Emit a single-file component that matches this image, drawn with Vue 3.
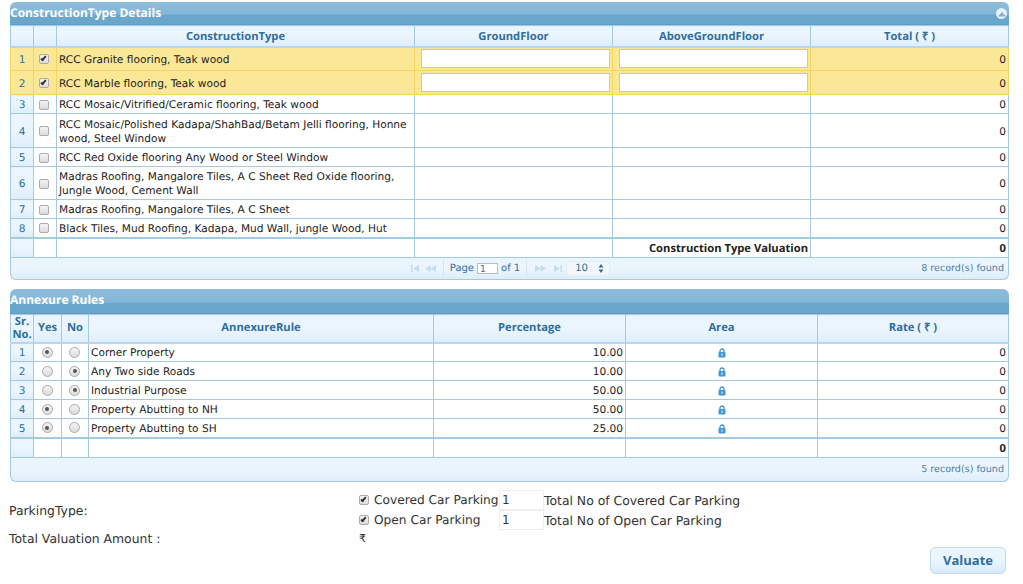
<script setup>
const constructionRows = [
  { n: 1, name: 'RCC Granite flooring, Teak wood', on: true, cls: 'h24' },
  { n: 2, name: 'RCC Marble flooring, Teak wood', on: true, cls: 'h24' },
  { n: 3, name: 'RCC Mosaic/Vitrified/Ceramic flooring, Teak wood', on: false, cls: 'h19' },
  { n: 4, name: 'RCC Mosaic/Polished Kadapa/ShahBad/Betam Jelli flooring, Honne wood, Steel Window', on: false, cls: 'h34' },
  { n: 5, name: 'RCC Red Oxide flooring Any Wood or Steel Window', on: false, cls: 'h19' },
  { n: 6, name: 'Madras Roofing, Mangalore Tiles, A C Sheet Red Oxide flooring, Jungle Wood, Cement Wall', on: false, cls: 'h33' },
  { n: 7, name: 'Madras Roofing, Mangalore Tiles, A C Sheet', on: false, cls: 'h19' },
  { n: 8, name: 'Black Tiles, Mud Roofing, Kadapa, Mud Wall, jungle Wood, Hut', on: false, cls: 'h19' }
]
const annexRows = [
  { n: 1, name: 'Corner Property', yes: true, pct: '10.00' },
  { n: 2, name: 'Any Two side Roads', yes: false, pct: '10.00' },
  { n: 3, name: 'Industrial Purpose', yes: false, pct: '50.00' },
  { n: 4, name: 'Property Abutting to NH', yes: true, pct: '50.00' },
  { n: 5, name: 'Property Abutting to SH', yes: true, pct: '25.00' }
]
</script>

<template>
  <div class="page">
    <section class="panel first">
      <header class="title">
        <span>ConstructionType Details</span>
        <span class="collapse"><svg width="10" height="6" viewBox="0 0 10 6"><path d="M1 5.500 5 1l4 4.500z" fill="#7fb2d3" /></svg></span>
      </header>
      <table class="grid grid-first">
        <colgroup><col class="c23" /><col class="c23" /><col class="c358" /><col class="c198" /><col class="c198" /><col /></colgroup>
        <thead>
          <tr class="head h21">
            <th></th><th></th><th>ConstructionType</th><th>GroundFloor</th><th>AboveGroundFloor</th><th>Total ( ₹ )</th>
          </tr>
        </thead>
        <tbody>
          <tr v-for="r in constructionRows" :key="r.n" :class="[r.cls, { picked: r.on }]">
            <td class="num">{{ r.n }}</td>
            <td class="ctr"><input type="checkbox" class="chk" :checked="r.on" /></td>
            <td class="txt">{{ r.name }}</td>
            <td class="ctr"><input v-if="r.on" class="field" type="text" /></td>
            <td class="ctr"><input v-if="r.on" class="field" type="text" /></td>
            <td class="right">0</td>
          </tr>
          <tr class="foot h20">
            <td class="num"></td><td></td><td></td><td></td>
            <td class="right strong">Construction Type Valuation</td>
            <td class="right strong">0</td>
          </tr>
        </tbody>
      </table>
      <footer class="pager p22">
        <div class="controls">
          <svg class="nav lead" width="10" height="7" viewBox="0 0 10 7"><path d="M1 0h1.500v7H1zM9 0v7L3 3.500z" /></svg>
          <svg class="nav lead" width="11" height="7" viewBox="0 0 11 7"><path d="M5.500 0v7L0 3.500zM11 0v7L5.500 3.500z" /></svg>
          <i class="sep"></i>
          <span>Page</span><input class="page-box" type="text" value="1" /><span>of 1</span>
          <i class="sep"></i>
          <svg class="nav" width="11" height="7" viewBox="0 0 11 7"><path d="M0 0v7l5.500-3.500zM5.500 0v7L11 3.500z" /></svg>
          <svg class="nav" width="10" height="7" viewBox="0 0 10 7"><path d="M1 0v7l6-3.500zM7.500 0H9v7H7.500z" /></svg>
          <span class="select"><span>10</span><svg width="6" height="9" viewBox="0 0 6 9"><path d="M3 0l2.500 3.500h-5zM3 9 .5 5.500h5z" fill="#2e6e9e" /></svg></span>
        </div>
        <span class="found">8 record(s) found</span>
      </footer>
    </section>

    <section class="panel second">
      <header class="title tall">
        <span>Annexure Rules</span>
      </header>
      <table class="grid">
        <colgroup><col class="c23" /><col class="c28" /><col class="c27" /><col class="c345" /><col class="c192" /><col class="c192" /><col /></colgroup>
        <thead>
          <tr class="head h28">
            <th class="srno">Sr.<br />No.</th><th>Yes</th><th>No</th><th>AnnexureRule</th><th>Percentage</th><th>Area</th><th>Rate ( ₹ )</th>
          </tr>
        </thead>
        <tbody>
          <tr v-for="r in annexRows" :key="r.n" class="h19">
            <td class="num">{{ r.n }}</td>
            <td class="ctr"><input type="radio" class="rad" :name="'a' + r.n" :checked="r.yes" /></td>
            <td class="ctr"><input type="radio" class="rad" :name="'a' + r.n" :checked="!r.yes" /></td>
            <td class="txt">{{ r.name }}</td>
            <td class="right">{{ r.pct }}</td>
            <td class="ctr">
              <svg class="lock" width="8" height="10" viewBox="0 0 8 10"><path d="M2 4.500V3a2 2 0 0 1 4 0v1.500" fill="none" stroke="#3f97d8" stroke-width="1.300" /><rect x=".5" y="4" width="7" height="5.500" rx="1" fill="#3f97d8" /><rect x="3.300" y="5.600" width="1.400" height="2.200" fill="#bfe0f5" /></svg>
            </td>
            <td class="right">0</td>
          </tr>
          <tr class="foot h20">
            <td class="num"></td><td></td><td></td><td></td><td></td><td></td>
            <td class="right strong">0</td>
          </tr>
        </tbody>
      </table>
      <footer class="pager p24">
        <span class="found">5 record(s) found</span>
      </footer>
    </section>

    <div class="summary">
      <div class="labels">
        <div class="lab-park">ParkingType:</div>
        <div class="lab-total">Total Valuation Amount :</div>
      </div>
      <div class="values">
        <div class="line">
          <input type="checkbox" class="chk" checked />
          <span class="pname">Covered Car Parking</span>
          <input class="qty" type="text" value="1" />
          <span>Total No of Covered Car Parking</span>
        </div>
        <div class="line">
          <input type="checkbox" class="chk" checked />
          <span class="pname">Open Car Parking</span>
          <input class="qty" type="text" value="1" />
          <span>Total No of Open Car Parking</span>
        </div>
        <div class="rupee">₹</div>
      </div>
    </div>
    <div class="actions"><button class="valuate" type="button">Valuate</button></div>
  </div>
</template>

<style>
html, body { background: #fefefe; }
</style>

<style scoped>
.page {
  width: 1023px;
  height: 584px;
  box-sizing: border-box;
  padding: 2px 14px 0 10px;
  overflow: hidden;
  font-family: "DejaVu Sans", "Open Sans", sans-serif;
  font-size: 10.600px;
  text-rendering: geometricPrecision;
  color: #222;
}
.panel {
  border-radius: 6px;
  box-sizing: border-box;
}
.second { margin-top: 9px; }
.title {
  height: 23px;
  box-sizing: border-box;
  border-radius: 6px 6px 0 0;
  padding: 2px 2px 0 0;
  display: flex;
  justify-content: space-between;
  font-family: "Open Sans", sans-serif;
  font-size: 12px;
  font-weight: 700;
  color: #fff;
  background: linear-gradient(#8fbddb, #82b6d7 55%, #6aa6cc 60%, #6ba7cc);
  border-bottom: 1px solid #5f9ec7;
}
.tall { height: 25px; padding-top: 2px; }
.collapse {
  width: 11px;
  height: 11px;
  border-radius: 50%;
  background: #e6f0f7;
  display: flex;
  align-items: center;
  justify-content: center;
  margin-top: 4px;
}
.grid {
  width: 100%;
  table-layout: fixed;
  border-collapse: collapse;
  background: #fff;
}
.c23 { width: 23px; }
.c27 { width: 27px; }
.c28 { width: 28px; }
.c358 { width: 358px; }
.c198 { width: 198px; }
.c345 { width: 345px; }
.c192 { width: 192px; }
.grid th, .grid td {
  border: 1px solid #a6c9e2;
  padding: 0 2px;
  line-height: 14px;
}
.grid td.num, .grid td.txt, .grid td.right { padding-top: 2px; }
.grid-first th { padding-top: 2px; }
.h19 { height: 19px; }
.h20 { height: 20px; }
.h21 { height: 21px; }
.h24 { height: 24px; }
.h28 { height: 28px; }
.h33 { height: 33px; }
.h34 { height: 34px; }
.head th {
  background: linear-gradient(#eaf5fe 50%, #deeefa);
  color: #2e6e9e;
  font-family: "Open Sans", sans-serif;
  font-size: 11.200px;
  font-weight: 700;
  border-bottom: 2px solid #b9d6ec;
}
.srno { line-height: 13px !important; padding: 0 !important; }
.num {
  text-align: center;
  color: #2e6e9e;
  background: linear-gradient(#eaf5fe 50%, #deeefa);
}
.ctr { text-align: center; }
.txt { color: #222; }
.right { text-align: right; }
.grid td.right { padding-right: 2px; }
.strong { font-family: "Open Sans", sans-serif; font-size: 11.200px; font-weight: 700; }
.picked td {
  background: #fbe896;
  border-color: #f9d45c;
}
.foot td { border-top: 2px solid #a6c9e2; }
.chk, .rad {
  appearance: none;
  margin: 0;
  vertical-align: middle;
  position: relative;
  display: inline-block;
  background: linear-gradient(#f4f4f4, #dcdcdc);
  border: 1px solid #ababab;
}
.chk { width: 10px; height: 10px; border-radius: 2px; }
.ctr .chk { margin: 1px 2px 0 0; }
.chk:checked::after {
  content: "";
  position: absolute;
  left: 2px;
  top: 0;
  width: 3px;
  height: 6px;
  border: solid #333;
  border-width: 0 2px 2px 0;
  box-sizing: border-box;
  transform: rotate(40deg);
}
.rad { width: 11px; height: 11px; border-radius: 50%; margin-right: 1px; }
.rad:checked::after {
  content: "";
  position: absolute;
  left: 2.500px;
  top: 2.500px;
  width: 4px;
  height: 4px;
  border-radius: 50%;
  background: #555;
}
.field {
  width: 189px;
  height: 19px;
  box-sizing: border-box;
  border: 1px solid #c8c8c8;
  background: #fff;
  display: block;
  margin: 0 0 0 4px;
  padding: 0 2px;
}
.lock { display: block; margin: 2px auto 0; }
.pager {
  display: grid;
  grid-template-columns: 1fr auto 1fr;
  align-items: center;
  box-sizing: border-box;
  padding: 0 4px;
  background: linear-gradient(#eaf5fe 50%, #deeefa);
  border: 1px solid #a6c9e2;
  border-top: 0;
  border-radius: 0 0 6px 6px;
  color: #2e6e9e;
}
.p22 { height: 22px; }
.p24 { height: 24px; }
.found { grid-column: 3; text-align: right; font-size: 9.600px; color: #4f7f9f; }
.controls {
  grid-column: 2;
  display: flex;
  align-items: center;
  gap: 3px;
  font-size: 10px;
  margin-left: 0;
}
.nav { fill: #c3dcee; margin: 0 2px; }
.nav.lead { margin: 0 1px; }
.sep { width: 1px; height: 17px; background: #d5e5f0; margin: 0 3px; }
.page-box {
  width: 21px;
  height: 11px;
  box-sizing: border-box;
  border: 1px solid #bcbcbc;
  background: #fff;
  font: 9px "DejaVu Sans", sans-serif;
  color: #2e6e9e;
  padding: 0 2px;
}
.select {
  width: 44px;
  height: 15px;
  box-sizing: border-box;
  display: flex;
  align-items: center;
  justify-content: space-between;
  padding: 0 5px 0 8px;
  background: #f4f7f9;
  border: 1px solid #e4edf3;
  border-radius: 4px;
  margin-left: -2px;
}
.summary {
  display: flex;
  margin-top: 8px;
  margin-left: -1px;
  font-size: 12.400px;
  color: #333;
}
.labels { width: 350px; }
.lab-park { margin-top: 13px; line-height: 16px; }
.lab-total { margin-top: 12px; line-height: 16px; }
.line {
  display: flex;
  align-items: center;
  height: 20px;
}
.pname { width: 125px; margin-left: 5px; white-space: nowrap; font-size: 12.200px; }
.qty {
  width: 45px;
  height: 20px;
  box-sizing: border-box;
  border: 1px solid #eee;
  background: #fff;
  padding: 0 2px;
  font: 12px "DejaVu Sans", sans-serif;
  color: #333;
}
.rupee { font-size: 11px; line-height: 18px; }
.actions { display: flex; justify-content: flex-end; padding-right: 3px; margin-top: -1px; }
.valuate {
  width: 76px;
  height: 27px;
  border: 1px solid #c5dbec;
  border-radius: 5px;
  background: linear-gradient(#eaf5fe 50%, #d8ebf9);
  color: #2e6e9e;
  font: 700 13px "Open Sans", sans-serif;
  padding: 0 0 2px;
}
</style>
